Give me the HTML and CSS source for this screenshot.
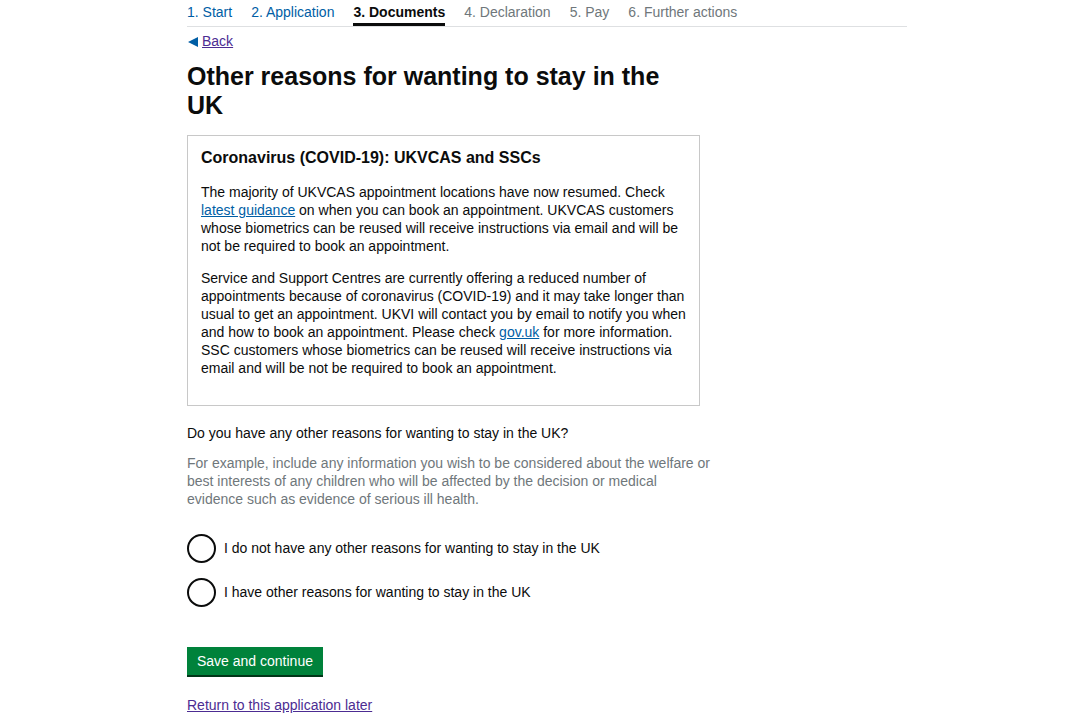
FILE: index.html
```html
<!DOCTYPE html>
<html lang="en">
<head>
    <meta charset="UTF-8">
    <title>Other reasons for wanting to stay in the UK</title>
    <link rel="stylesheet" href="styles.css">
</head>
<body>
    <div class="page">
        <nav class="steps">
            <span class="step done">1. Start</span>
            <span class="step done">2. Application</span>
            <span class="step active">3. Documents</span>
            <span class="step">4. Declaration</span>
            <span class="step">5. Pay</span>
            <span class="step">6. Further actions</span>
        </nav>

        <a href="#" class="back"><span class="back-arrow"></span>Back</a>

        <main class="main">
            <h1>Other reasons for wanting to stay in the UK</h1>

            <div class="notice">
                <h2>Coronavirus (COVID-19): UKVCAS and SSCs</h2>
                <p>The majority of UKVCAS appointment locations have now resumed. Check <a href="#" class="link">latest guidance</a> on when you can book an appointment. UKVCAS customers whose biometrics can be reused will receive instructions via email and will be not be required to book an appointment.</p>
                <p>Service and Support Centres are currently offering a reduced number of appointments because of coronavirus (COVID-19) and it may take longer than usual to get an appointment. UKVI will contact you by email to notify you when and how to book an appointment. Please check <a href="#" class="link">gov.uk</a> for more information. SSC customers whose biometrics can be reused will receive instructions via email and will be not be required to book an appointment.</p>
            </div>

            <fieldset class="question">
                <legend>Do you have any other reasons for wanting to stay in the UK?</legend>
                <p class="hint">For example, include any information you wish to be considered about the welfare or best interests of any children who will be affected by the decision or medical evidence such as evidence of serious ill health.</p>

                <label class="radio">
                    <input type="radio" name="reasons">
                    <span class="radio-label">I do not have any other reasons for wanting to stay in the UK</span>
                </label>
                <label class="radio">
                    <input type="radio" name="reasons">
                    <span class="radio-label">I have other reasons for wanting to stay in the UK</span>
                </label>
            </fieldset>

            <button class="button">Save and continue</button>

            <a href="#" class="later">Return to this application later</a>
        </main>
    </div>
</body>
</html>
```

FILE: styles.css
```css
* {
    box-sizing: border-box;
}

body {
    margin: 0;
    font-family: "Liberation Sans", Arial, sans-serif;
    color: #0b0c0c;
    background: #ffffff;
}

.page {
    width: 720px;
    margin-left: 187px;
}

/* Steps */
.steps {
    display: flex;
    gap: 19px;
    border-bottom: 1px solid #dee0e2;
    height: 27px;
    padding-top: 4px;
    font-size: 14px;
}

.step {
    color: #6f777b;
    line-height: 17px;
}

.step.done {
    color: #005ea5;
}

.step.active {
    color: #0b0c0c;
    font-weight: bold;
    border-bottom: 3px solid #0b0c0c;
    height: 22px;
}

/* Back */
.back {
    display: inline-flex;
    align-items: center;
    margin-top: 6px;
    font-size: 14px;
    line-height: 17px;
    color: #4c2c92;
}

.back-arrow {
    width: 0;
    height: 0;
    border-top: 5px solid transparent;
    border-bottom: 5px solid transparent;
    border-right: 10px solid #005ea5;
    margin: 0 4px 0 1px;
}

.main {
    width: 513px;
}

h1 {
    font-size: 25px;
    line-height: 29px;
    margin: 11px 0 15px;
}

/* Notice */
.notice {
    border: 1px solid #c8c8c8;
    padding: 12px 13px 14px;
}

.notice h2 {
    font-size: 16px;
    line-height: 20px;
    margin: 0 0 15px;
}

.notice p {
    font-size: 14px;
    line-height: 18px;
    margin: 0 0 14px;
}

.link {
    color: #005ea5;
}

/* Question */
.question {
    border: 0;
    padding: 0;
    margin: 18px 0 0;
    font-size: 14px;
}

.question legend {
    padding: 0;
    line-height: 18px;
}

.hint {
    width: 525px;
    color: #6f777b;
    line-height: 18px;
    margin: 12px 0 26px;
}

.radio {
    display: flex;
    align-items: center;
    gap: 8px;
    margin-bottom: 15px;
}

.radio input {
    appearance: none;
    width: 29px;
    height: 29px;
    margin: 0;
    border: 2px solid #0b0c0c;
    border-radius: 50%;
}

.radio-label {
    line-height: 18px;
}

/* Button */
.button {
    display: block;
    margin-top: 25px;
    padding: 0 10px;
    height: 28px;
    background: #00823b;
    color: #ffffff;
    border: 0;
    box-shadow: 0 2px 0 #003618;
    font-family: inherit;
    font-size: 14px;
}

.later {
    display: inline-block;
    margin-top: 22px;
    font-size: 14px;
    color: #4c2c92;
}
```
